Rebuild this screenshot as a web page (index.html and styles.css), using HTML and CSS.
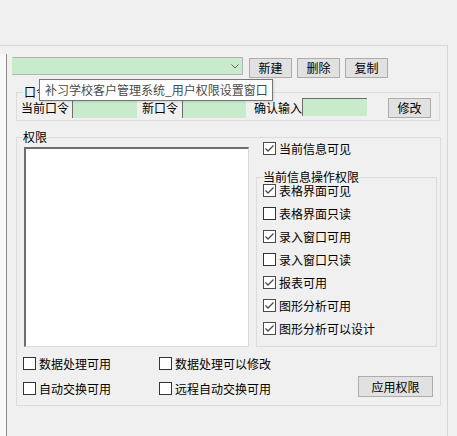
FILE: index.html
```html
<!DOCTYPE html>
<html lang="zh-CN">
<head>
<meta charset="utf-8">
<title>用户权限设置窗口</title>
<link rel="stylesheet" href="styles.css">
</head>
<body>
<div class="top"></div>
<div class="frame">
  <div class="gutter"></div>
  <div class="main">
    <div class="toolbar">
      <div class="combo">
        <svg class="arrow" width="8" height="5" viewBox="0 0 8 5"><polyline points="0.5,0.5 4,4 7.5,0.5" fill="none" stroke="#606060" stroke-width="1"/></svg>
      </div>
      <button class="btn">新建</button>
      <button class="btn">删除</button>
      <button class="btn">复制</button>
    </div>

    <fieldset class="group pwd">
      <legend class="legend-pwd">口令</legend>
      <div class="pwd-row">
        <span class="lbl l1">当前口令</span><span class="inp i1"></span>
        <span class="lbl l2">新口令</span><span class="inp i2"></span>
        <span class="lbl l3">确认输入</span><span class="inp i3"></span>
        <button class="btn btn-edit">修改</button>
      </div>
    </fieldset>

    <fieldset class="group perm">
      <legend>权限</legend>
      <div class="perm-body">
        <div class="listbox"></div>
        <div class="perm-right">
          <div class="chk top-chk"><span class="box on"><svg viewBox="0 0 11 11"><polyline points="1.5,5.5 4,8 9.5,2.5"/></svg></span><span>当前信息可见</span></div>
          <fieldset class="group ops">
            <legend>当前信息操作权限</legend>
            <div class="ops-list">
              <div class="chk"><span class="box on"><svg viewBox="0 0 11 11"><polyline points="1.5,5.5 4,8 9.5,2.5"/></svg></span><span>表格界面可见</span></div>
              <div class="chk"><span class="box"></span><span>表格界面只读</span></div>
              <div class="chk"><span class="box on"><svg viewBox="0 0 11 11"><polyline points="1.5,5.5 4,8 9.5,2.5"/></svg></span><span>录入窗口可用</span></div>
              <div class="chk"><span class="box"></span><span>录入窗口只读</span></div>
              <div class="chk"><span class="box on"><svg viewBox="0 0 11 11"><polyline points="1.5,5.5 4,8 9.5,2.5"/></svg></span><span>报表可用</span></div>
              <div class="chk"><span class="box on"><svg viewBox="0 0 11 11"><polyline points="1.5,5.5 4,8 9.5,2.5"/></svg></span><span>图形分析可用</span></div>
              <div class="chk"><span class="box on"><svg viewBox="0 0 11 11"><polyline points="1.5,5.5 4,8 9.5,2.5"/></svg></span><span>图形分析可以设计</span></div>
            </div>
          </fieldset>
        </div>
      </div>
      <div class="perm-bottom">
        <div class="opts">
          <div class="chk"><span class="box"></span><span>数据处理可用</span></div>
          <div class="chk"><span class="box"></span><span>数据处理可以修改</span></div>
          <div class="chk"><span class="box"></span><span>自动交换可用</span></div>
          <div class="chk"><span class="box"></span><span>远程自动交换可用</span></div>
        </div>
        <button class="btn btn-apply">应用权限</button>
      </div>
    </fieldset>
  </div>
  <div class="tooltip">补习学校客户管理系统_用户权限设置窗口</div>
</div>
</body>
</html>
```

FILE: styles.css
```css
* { box-sizing: border-box; }

body {
  margin: 0;
  background: #f0f0f0;
  font-family: "Noto Sans CJK SC", "Noto Sans", sans-serif;
  font-size: 12px;
  color: #000;
}

.top { height: 45px; }

.frame {
  position: relative;
  display: flex;
  width: 448px;
  height: 391px;
  border-top: 1px solid #d6d6d6;
  border-right: 1px solid #d6d6d6;
}

.gutter {
  width: 7px;
  margin-top: 8px;
  background: #f8f8f8;
  border-right: 1px solid #8c8c8c;
}

.main {
  flex: 1;
  padding-top: 11px;
}

/* toolbar */
.toolbar {
  display: flex;
  align-items: flex-start;
  margin-left: 5px;
}

.combo {
  width: 231px;
  height: 18px;
  background: #c8ebcb;
  border: 1px solid #b4b4b4;
  border-left-color: #c8ebcb;
  display: flex;
  justify-content: flex-end;
  align-items: center;
  padding-right: 3px;
}

.arrow { display: block; }

.btn {
  width: 43px;
  height: 20px;
  margin: 1px 0 0 5px;
  padding: 0;
  background: #e1e1e1;
  border: 1px solid #adadad;
  font-family: inherit;
  font-size: 12px;
  line-height: 18px;
  color: #000;
}

.toolbar .btn:first-of-type { margin-left: 6px; }

/* group boxes */
.group {
  margin: 0;
  border: 1px solid #dcdcdc;
  min-width: 0;
}

.group legend {
  padding: 0 1px;
  margin-left: -1px;
  line-height: 12px;
  font-size: 12px;
}

.pwd {
  margin: 8px 0 0 9px;
  width: 424px;
  padding: 0 0 2px 4px;
}

.pwd .legend-pwd { margin-left: 2px; }

.pwd-row {
  display: flex;
  align-items: flex-start;
  height: 20px;
}

.lbl {
  line-height: 20px;
  white-space: nowrap;
}

.inp {
  display: block;
  background: #c8ebcb;
}

.i1 { margin: 3px 0 0 3px; width: 65px; height: 17px; border-left: 1px solid #6d6d6d; }
.l2 { margin-left: 5px; }
.i2 { margin: 3px 0 0 4px; width: 64px; height: 17px; border-left: 1px solid #6d6d6d; }
.l3 { margin-left: 8px; }
.i3 { width: 65px; height: 18px; border-top: 1px solid #6d6d6d; border-left: 1px solid #6d6d6d; }

.btn-edit { margin: 0 0 0 21px; }

/* permission group */
.perm {
  margin: 10px 0 0 9px;
  width: 425px;
  padding: 0 3px 8px 6px;
}

.perm-body {
  display: flex;
  align-items: flex-start;
}

.listbox {
  margin: 4px 0 0 1px;
  width: 225px;
  height: 200px;
  background: #fff;
  border-style: solid;
  border-width: 2px 1px 1px 2px;
  border-color: #6e6e6e #dadada #dadada #6e6e6e;
}

.perm-right {
  margin: -1px 0 0 7px;
  width: 181px;
}

.top-chk { margin-left: 7px; }

.ops {
  margin-top: 16px;
  width: 181px;
  padding: 0 0 11px 6px;
}

.ops-list {
  display: flex;
  flex-direction: column;
  gap: 10px;
  margin-top: 1px;
}

/* checkbox */
.chk {
  display: flex;
  align-items: center;
  height: 13px;
  line-height: 13px;
  white-space: nowrap;
}

.box {
  width: 13px;
  height: 13px;
  margin-right: 3px;
  background: #fff;
  border: 1px solid #333;
  flex: none;
}

.box.on { border-color: #4a4a4a; }

.box svg {
  display: block;
  width: 11px;
  height: 11px;
}

.box svg polyline {
  fill: none;
  stroke: #4a4a4a;
  stroke-width: 1.3;
}

/* bottom */
.perm-bottom {
  display: flex;
  align-items: flex-start;
  margin-top: 10px;
}

.opts {
  display: grid;
  grid-template-columns: 136px auto;
  row-gap: 12px;
}

.btn-apply {
  width: 75px;
  height: 21px;
  margin: 19px 4px 0 auto;
  line-height: 19px;
}

/* tooltip */
.tooltip {
  position: absolute;
  left: 39px;
  top: 33px;
  width: 234px;
  height: 22px;
  padding-left: 5px;
  background: #fff;
  border: 1px solid #767676;
  color: #4a4a4a;
  line-height: 20px;
  white-space: nowrap;
  box-shadow: 1px 1px 2px rgba(0, 0, 0, 0.12);
}
```
